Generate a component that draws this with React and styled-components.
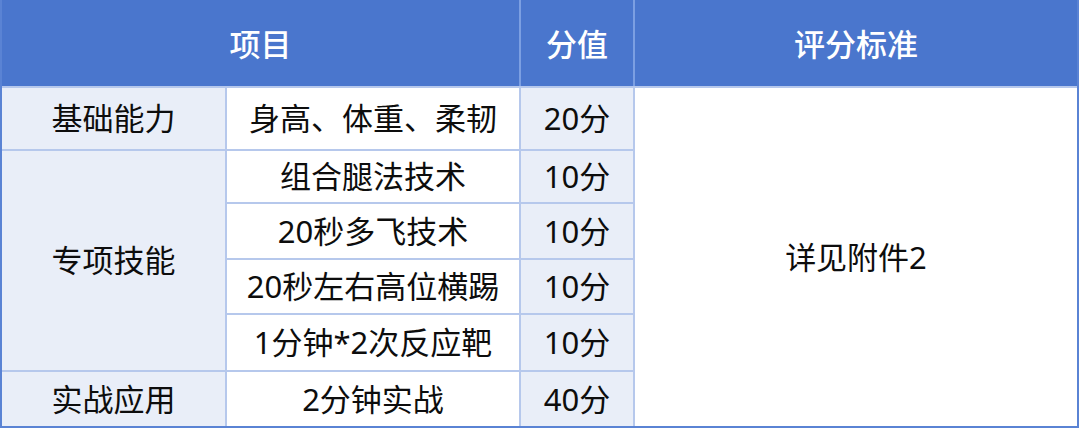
import React from "react";
import styled, { createGlobalStyle } from "styled-components";

const Global = createGlobalStyle`
  html, body { margin: 0; padding: 0; background: #ffffff; }
  body { font-family: "Noto Sans", "Noto Sans CJK SC", sans-serif; }
`;

const Table = styled.div`
  box-sizing: border-box;
  width: 1079px;
  height: 428px;
  display: grid;
  grid-template-columns: 225px 294px 114px 1fr;
  grid-template-rows: 86px 63px 53px 56px 55px 57px 1fr;
  border-left: 2px solid #5a83d4;
  border-right: 2px solid #5a83d4;
  border-bottom: 2px solid #5a83d4;
`;

const Head = styled.div`
  box-sizing: border-box;
  display: flex;
  align-items: center;
  justify-content: center;
  padding-bottom: 2px;
  background: #4a76cd;
  color: #ffffff;
  font-size: 31px;
  font-weight: 500;
  grid-column: ${(p) => p.$col || "auto"};
  border-right: ${(p) => (p.$last ? "none" : "2px solid #7c9fe2")};
`;

const Cell = styled.div`
  box-sizing: border-box;
  display: flex;
  align-items: center;
  justify-content: center;
  padding-bottom: 4px;
  background: ${(p) => (p.$shade ? "#e9eef8" : "#ffffff")};
  color: #0d0d0d;
  font-size: 31px;
  font-weight: 400;
  white-space: nowrap;
  grid-column: ${(p) => p.$col || "auto"};
  grid-row: ${(p) => p.$row || "auto"};
  border-right: ${(p) => (p.$last ? "none" : "2px solid #b6c8ec")};
  border-top: 2px solid #b6c8ec;
`;

const rows = [
  { item: "组合腿法技术", score: "10分" },
  { item: "20秒多飞技术", score: "10分" },
  { item: "20秒左右高位横踢", score: "10分" },
  { item: "1分钟*2次反应靶", score: "10分" },
];

export default function App() {
  return (
    <>
      <Global />
      <Table>
        <Head $col="1 / 3">项目</Head>
        <Head>分值</Head>
        <Head $last>评分标准</Head>

        <Cell $shade $col="1" $row="2">基础能力</Cell>
        <Cell $col="2" $row="2">身高、体重、柔韧</Cell>
        <Cell $shade $col="3" $row="2">20分</Cell>
        <Cell $last $col="4" $row="2 / 8">详见附件2</Cell>

        <Cell $shade $col="1" $row="3 / 7">专项技能</Cell>
        {rows.map((r, i) => (
          <React.Fragment key={i}>
            <Cell $col="2" $row={`${i + 3}`}>{r.item}</Cell>
            <Cell $shade $col="3" $row={`${i + 3}`}>{r.score}</Cell>
          </React.Fragment>
        ))}

        <Cell $shade $col="1" $row="7">实战应用</Cell>
        <Cell $col="2" $row="7">2分钟实战</Cell>
        <Cell $shade $col="3" $row="7">40分</Cell>
      </Table>
    </>
  );
}
